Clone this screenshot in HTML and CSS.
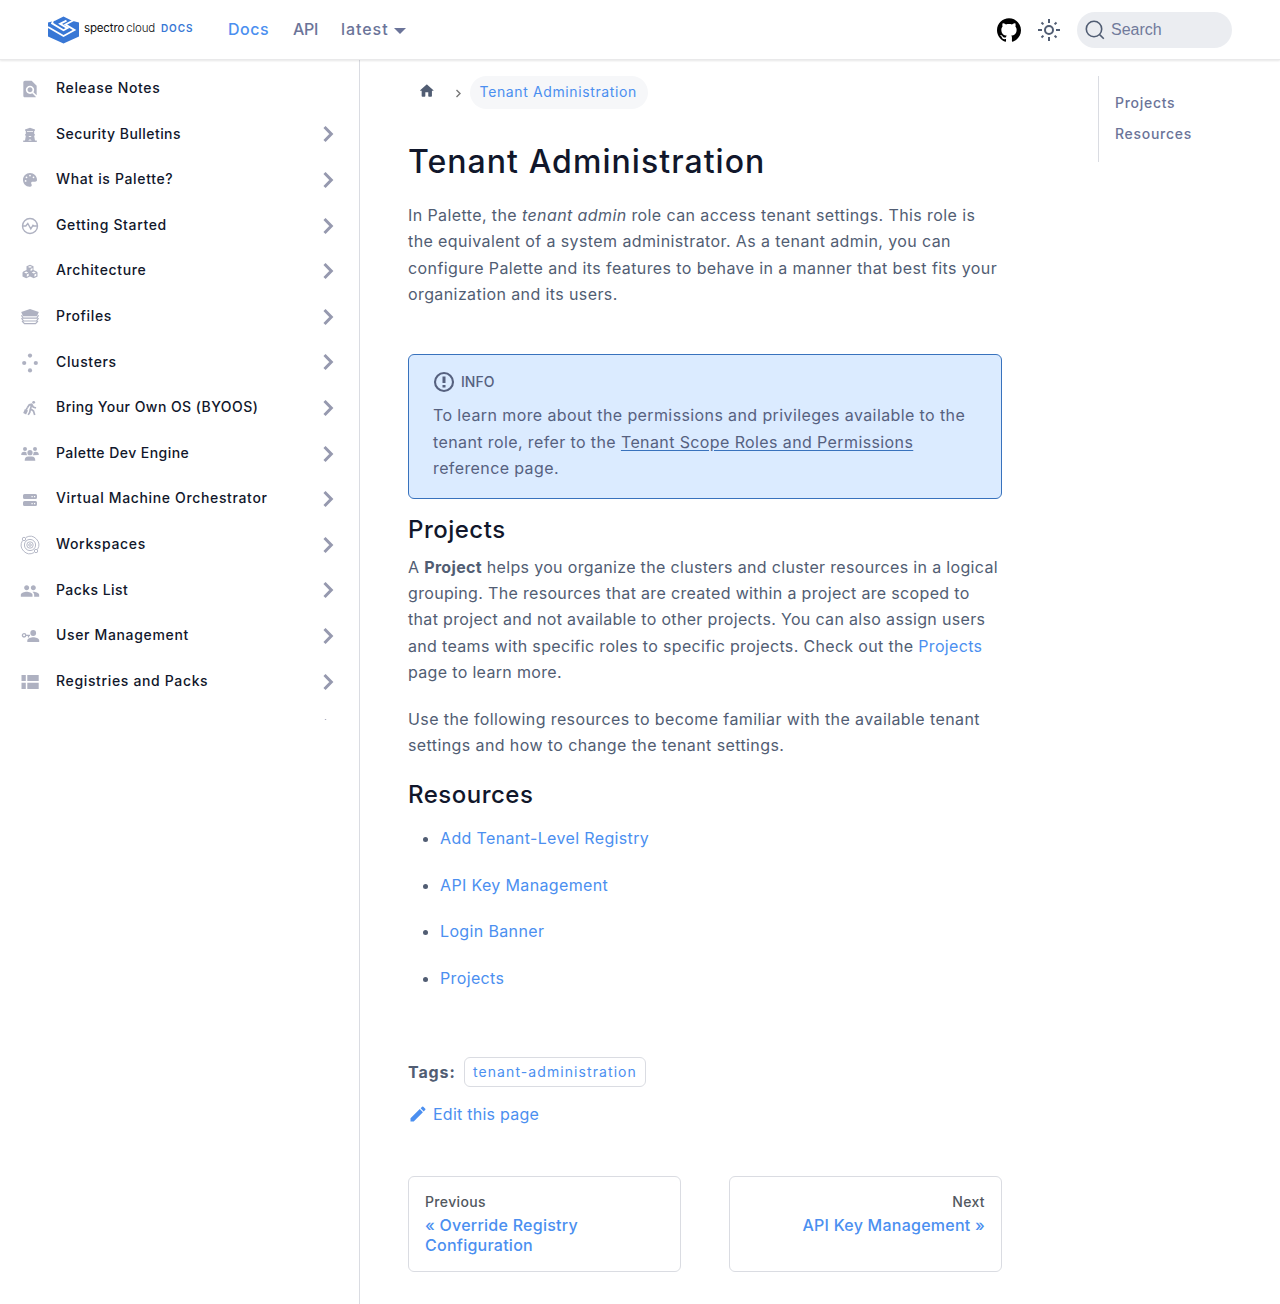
FILE: index.html
```
<!DOCTYPE html>
<html lang="en">
<head>
<meta charset="utf-8">
<title>Tenant Administration | Spectro Cloud Docs</title>
<link rel="stylesheet" href="styles.css">
</head>
<body>
<svg width="0" height="0" class="defs">
  <symbol id="chev" viewBox="0 0 24 32"><path d="m8.500 9 6.800 7-6.800 7" fill="none" stroke="#9699af" stroke-width="3"/></symbol>
</svg>
<header class="navbar">
  <a class="brand">
    <svg width="31" height="28" viewBox="0 0 31 27"><path fill="#3877d5" d="M15.500 0 24 4.200 31 6v14l-15.500 7L0 20V6l7-1.800z"/><path fill="none" stroke="#fff" stroke-width="1.800" d="M0 10.500l15.500 9 11-6-9-5.500 8.500-4.500M5 4.500l-1 2.300 11.500 7 4-2.200-7.500-4.200 6.500-3.300"/></svg>
    <span class="brand-name">spectro <span>cloud</span></span><span class="brand-docs">DOCS</span>
  </a>
  <nav class="nav-links"><a class="active">Docs</a><a>API</a><a class="drop">latest</a></nav>
  <div class="nav-right">
    <svg width="24" height="24" viewBox="0 0 24 24"><path d="M12 .297c-6.630 0-12 5.373-12 12 0 5.303 3.438 9.800 8.205 11.385.6.113.82-.258.82-.577 0-.285-.01-1.040-.015-2.040-3.338.724-4.042-1.610-4.042-1.610C4.422 18.070 3.633 17.700 3.633 17.700c-1.087-.744.084-.729.084-.729 1.205.084 1.838 1.236 1.838 1.236 1.070 1.835 2.809 1.305 3.495.998.108-.776.417-1.305.76-1.605-2.665-.3-5.466-1.332-5.466-5.930 0-1.310.465-2.380 1.235-3.220-.135-.303-.54-1.523.105-3.176 0 0 1.005-.322 3.300 1.230.96-.267 1.980-.399 3-.405 1.020.006 2.040.138 3 .405 2.280-1.552 3.285-1.230 3.285-1.230.645 1.653.24 2.873.12 3.176.765.840 1.230 1.910 1.230 3.220 0 4.610-2.805 5.625-5.475 5.920.42.360.81 1.096.81 2.220 0 1.606-.015 2.896-.015 3.286 0 .315.210.690.825.570C20.565 22.092 24 17.592 24 12.297c0-6.627-5.373-12-12-12"/></svg>
    <svg class="sun" width="24" height="24" viewBox="0 0 24 24"><circle cx="12" cy="12" r="4"/><path d="M12 1v4M12 19v4M1 12h4M19 12h4M4.500 4.500l1.900 1.900M17.600 17.600l1.900 1.900M4.500 19.500l1.900-1.900M17.600 6.400l1.900-1.900"/></svg>
    <div class="search"><svg width="20" height="20" viewBox="0 0 20 20"><path d="M14.400 14.400 18.800 18.800M16.700 9A7.700 7.700 0 1 1 1.300 9a7.700 7.700 0 0 1 15.400 0z"/></svg>Search</div>
  </div>
</header>
<div class="layout">
  <aside class="sidebar"><ul>
    <li><svg class="i" viewBox="0 0 24 24"><path d="M20 19.590V8l-6-6H6c-1.100 0-2 .9-2 2v16c0 1.100.9 2 2 2h12c.45 0 .85-.15 1.190-.4l-4.430-4.430c-.8.520-1.740.830-2.760.830-2.760 0-5-2.240-5-5s2.240-5 5-5 5 2.240 5 5c0 1.020-.31 1.960-.83 2.750zM9 13c0 1.660 1.340 3 3 3s3-1.340 3-3-1.340-3-3-3-3 1.340-3 3z"/></svg><span>Release Notes</span></li>
    <li><svg class="i" viewBox="0 0 20 20"><path fill-rule="evenodd" d="M5 4.500 10 2.800l5 1.700v1.300h-.8v3.400H15v1.400h-.9l.9 5h1.800V17H3.200v-1.400H5l.9-5H5V9.200h.8V5.800H5zM7 6v.8h6V6zM8.300 11l1.700 1.300 1.700-1.300zM10 14.300l-1.800 1.300h3.600z"/></svg><span>Security Bulletins</span><svg class="c"><use href="#chev"/></svg></li>
    <li><svg class="i" viewBox="-109 -109 730 730"><path d="M512 256c0 37-33.600 64-70 64h-98c-26 0-48 21-48 48 0 27 24 45 24 72 0 32-22 61-53 62-3.500.1-7 .2-11 .2C115 512 0 397 0 256S115 0 256 0s256 115 256 256zM128 288a32 32 0 1 0-64 0 32 32 0 1 0 64 0zm0-96a32 32 0 1 0 0-64 32 32 0 1 0 0 64zM288 96a32 32 0 1 0-64 0 32 32 0 1 0 64 0zm96 96a32 32 0 1 0 0-64 32 32 0 1 0 0 64z"/></svg><span>What is Palette?</span><svg class="c"><use href="#chev"/></svg></li>
    <li><svg class="i line" viewBox="0 0 20 20"><circle cx="10" cy="10" r="7.500"/><path d="M2.500 10h3.300l2-2.500 3 5.300 2.200-3.500 1 .7h3.500"/></svg><span>Getting Started</span><svg class="c"><use href="#chev"/></svg></li>
    <li><svg class="i" viewBox="0 0 20 20"><path fill-rule="evenodd" d="m10 2.800 3.500 1.500v3.800l3.200 1.400.8.900v4l-3.700 1.900L10 14.600l-3.800 1.700-3.700-1.900v-4l.8-.9 3.200-1.400V4.300zM10 4 7.900 4.900l2.100.9 2.100-.9zM10.600 7v1.900l1.900-.9V6.100zM6.200 9.600l-2.100.9 2.100.9 2.100-.9zM6.800 12.500v2.200l1.900-1v-2.100zM13.800 9.600l-2.100.9 2.100.9 2.100-.9zM14.400 12.500v2.200l1.900-1v-2.100z"/></svg><span>Architecture</span><svg class="c"><use href="#chev"/></svg></li>
    <li><svg class="i" viewBox="0 0 20 20"><path d="m10 2 8.800 3-1.800 4.300H3L1.200 5z"/><path d="M1.500 8.200 3.200 11.200H16.800L18.500 8.200M1.500 11.200 3.500 14H16.500L18.500 11.200M2 14.200 4.500 16.700h11L18 14.200" fill="none" stroke="#aeb1c1" stroke-width="1.200"/></svg><span>Profiles</span><svg class="c"><use href="#chev"/></svg></li>
    <li><svg class="i" viewBox="0 0 20 20"><circle cx="10" cy="2.600" r="2.100"/><circle cx="4.200" cy="10" r="2.100"/><circle cx="15.800" cy="10" r="2.100"/><circle cx="10" cy="17.400" r="2.100"/></svg><span>Clusters</span><svg class="c"><use href="#chev"/></svg></li>
    <li><svg class="i" viewBox="0 0 20 20"><circle cx="13.700" cy="4.300" r="1.400"/><path d="m4.900 11 3.100 1.600-1.900 4-2.900-1.500z"/><path d="m7.300 9.800 2-3 2.400-.5 1.500 2.700 2.800 1M11.700 6.500l-1.200 4.300 3 2.200 1.200 4M10.300 11.500l-.6 3-1.500 2.400M7.200 9.800l-1 2" fill="none" stroke="#aeb1c1" stroke-width="1.700"/></svg><span>Bring Your Own OS (BYOOS)</span><svg class="c"><use href="#chev"/></svg></li>
    <li><svg class="i" viewBox="0 0 20 20"><circle cx="5" cy="4.900" r="2"/><circle cx="15" cy="4.900" r="2"/><circle cx="10" cy="8.700" r="2.600"/><path d="M1.200 11c0-2.300 1-3.300 3-3.300 1 0 1.900.3 2.300.9-.2 1.200.2 2 .8 2.700zM18.800 11c0-2.300-1-3.300-3-3.300-1 0-1.900.3-2.300.9.2 1.200-.2 2-.8 2.700zM4.700 16.800c0-3 1.300-4.300 3.500-4.300h3.600c2.200 0 3.500 1.300 3.500 4.300z"/></svg><span>Palette Dev Engine</span><svg class="c"><use href="#chev"/></svg></li>
    <li><svg class="i" viewBox="0 0 20 20"><path fill-rule="evenodd" d="M4.500 4h11Q17 4 17 5.500v2Q17 9 15.500 9h-11Q3 9 3 7.500v-2Q3 4 4.500 4zM11.500 6v1.200h1.200V6zM14 6v1.200h1.200V6zM4.500 11h11q1.500 0 1.500 1.500v2q0 1.500-1.500 1.500h-11Q3 16 3 14.500v-2Q3 11 4.500 11zm7 2v1.200h1.200V13zm2.500 0v1.200h1.200V13z"/></svg><span>Virtual Machine Orchestrator</span><svg class="c"><use href="#chev"/></svg></li>
    <li><svg class="i line thin" viewBox="0 0 20 20"><circle cx="10" cy="10" r="5.600"/><circle cx="10" cy="10" r="3.200"/><circle cx="10" cy="10" r="1.300"/><circle cx="4" cy="4" r="1.700"/><circle cx="16" cy="16" r="1.700"/><path d="M6 2.400a8.600 8.600 0 0 1 11.500 12M14 17.600A8.600 8.600 0 0 1 2.500 5.600"/></svg><span>Workspaces</span><svg class="c"><use href="#chev"/></svg></li>
    <li><svg class="i" viewBox="0 0 24 24"><path d="M16 11c1.660 0 3-1.340 3-3s-1.340-3-3-3-3 1.340-3 3 1.340 3 3 3zm-8 0c1.660 0 3-1.340 3-3S9.660 5 8 5 5 6.340 5 8s1.340 3 3 3zm0 2c-2.330 0-7 1.170-7 3.500V19h14v-2.500C15 14.170 10.330 13 8 13zm8 0c-.29 0-.62.020-.97.050C16.190 13.890 17 15.020 17 16.500V19h6v-2.500c0-2.330-4.670-3.500-7-3.500z"/></svg><span>Packs List</span><svg class="c"><use href="#chev"/></svg></li>
    <li><svg class="i" viewBox="0 0 20 20"><circle cx="13.200" cy="7" r="2.900"/><path d="M7.300 16v-1.500c0-2 3.900-3.200 6-3.200s5.900 1.200 5.900 3.200V16z"/><path d="M5.800 9.300H10M8.500 9.300v2.200M5.800 9.300a1.700 1.700 0 1 1-3.400 0 1.700 1.700 0 0 1 3.400 0z" fill="none" stroke="#aeb1c1" stroke-width="1.300"/></svg><span>User Management</span><svg class="c"><use href="#chev"/></svg></li>
    <li><svg class="i" viewBox="0 0 20 20"><path d="M1.500 3h4.300v6H1.500zM7.300 3h11.400v6H7.300zM1.500 10.700h4.300v6.300H1.500zM7.300 10.700h11.400v6.300H7.300z"/></svg><span>Registries and Packs</span><svg class="c"><use href="#chev"/></svg></li>
    <li><span></span><svg class="c"><use href="#chev"/></svg></li>
  </ul></aside>
  <main>
    <article>
      <nav class="crumbs"><svg width="17.600" height="17.600" viewBox="0 0 24 24"><path d="M10 19v-5h4v5c0 .55.45 1 1 1h3c.55 0 1-.45 1-1v-7h1.700c.46 0 .68-.57.33-.87L12.670 3.600c-.38-.34-.96-.34-1.340 0l-8.360 7.530c-.34.300-.13.870.33.870H5v7c0 .55.45 1 1 1h3c.55 0 1-.45 1-1z"/></svg><svg class="sep" width="7" height="9" viewBox="0 0 7 9"><path d="m1.500 1 3.500 3.500L1.500 8"/></svg><span>Tenant Administration</span></nav>
      <h1>Tenant Administration</h1>
      <p class="intro">In Palette, the <em>tenant admin</em> role can access tenant settings. This role is<br>the equivalent of a system administrator. As a tenant admin, you can<br>configure Palette and its features to behave in a manner that best fits your<br>organization and its users.</p>
      <div class="info">
        <div class="info-title"><svg width="22" height="22" viewBox="0 0 22 22"><circle cx="11" cy="11" r="9"/><path d="M11 5.500v6.500M11 14v2.600" stroke-width="3"/></svg>INFO</div>
        <p>To learn more about the permissions and privileges available to the<br>tenant role, refer to the <a>Tenant Scope Roles and Permissions</a><br>reference page.</p>
      </div>
      <h2>Projects</h2>
      <p class="tight">A <b>Project</b> helps you organize the clusters and cluster resources in a logical<br>grouping. The resources that are created within a project are scoped to<br>that project and not available to other projects. You can also assign users<br>and teams with specific roles to specific projects. Check out the <a>Projects</a><br>page to learn more.</p>
      <p class="intro">Use the following resources to become familiar with the available tenant<br>settings and how to change the tenant settings.</p>
      <h2 class="res">Resources</h2>
      <ul class="links"><li><a>Add Tenant-Level Registry</a></li><li><a>API Key Management</a></li><li><a>Login Banner</a></li><li><a>Projects</a></li></ul>
      <div class="tags"><b>Tags:</b><a>tenant-administration</a></div>
      <a class="edit"><svg width="20" height="20" viewBox="0 0 40 40"><path d="m34.500 11.700-3 3.100-6.300-6.300 3.100-3q.5-.5 1.200-.5t1.100.5l3.900 3.900q.5.400.5 1.100t-.5 1.200zM5 28.600 23.500 10.200l6.300 6.300L11.400 35H5v-6.400z"/></svg>Edit this page</a>
      <nav class="pager">
        <a><small>Previous</small>« Override Registry<br>Configuration</a>
        <a class="next"><small>Next</small>API Key Management »</a>
      </nav>
    </article>
    <div class="toc"><a>Projects</a><a>Resources</a></div>
  </main>
</div>
</body>
</html>
```
FILE: styles.css
```
* { box-sizing: border-box; }
body { margin: 0; background: #fff; color: #515d73; font: 400 16px/26.4px Inter, sans-serif; letter-spacing: .36px; }
svg { flex: none; display: block; }
ul { list-style: none; margin: 0; padding: 0; }
a { color: #4b8ff0; text-decoration: none; }
.defs { position: absolute; }
.navbar { display: flex; align-items: center; height: 60px; padding: 0 48px; background: #fff; position: relative; box-shadow: 0 1px 2px rgba(0,0,0,.1); border-bottom: 1px solid #e9e9ea; }
.brand { display: flex; align-items: center; width: 180px; }
.brand svg { margin-top: 1px; }
.brand-name { margin: -3px 0 0 5px; color: #111; font-size: 11.5px; letter-spacing: -.15px; white-space: nowrap; width: 77px; }
.brand-name span { font-weight: 300; margin-left: -1px; }
.brand-docs { margin-top: -2px; color: #3877d5; font-size: 10px; font-weight: 600; letter-spacing: .9px; }
.nav-links { display: flex; gap: 24px; font-weight: 500; letter-spacing: .5px; }
.nav-links a { color: #6b7499; width: 41px; }
.nav-links a:nth-child(2) { width: 24px; letter-spacing: -.3px; }
.nav-links .active { color: #4b8ff0; }
.nav-links .drop { width: auto; display: flex; align-items: center; gap: 5px; letter-spacing: .95px; }
.drop::after { content: ""; margin-top: 3px; border: 6.4px solid transparent; border-top-color: #6b7499; border-bottom: 0; }
.nav-right { display: flex; align-items: center; margin-left: auto; gap: 16px; }
.sun { fill: none; stroke: #515d73; stroke-width: 2; }
.search { display: flex; align-items: center; gap: 6px; width: 155px; height: 36px; padding: 0 8px; border-radius: 18px; background: #ebedf1; color: #717a9b; font: 16px "Liberation Sans", sans-serif; letter-spacing: 0; }
.search svg { fill: none; stroke: #515d73; stroke-width: 1.6; }
.layout { display: flex; height: 1244px; }
.sidebar { width: 360px; border-right: 1px solid #dadce2; }
.sidebar ul { height: 660px; overflow: hidden; padding-top: 6px; }
.sidebar li { display: flex; align-items: center; height: 45.6px; padding: 0 19px 0 20px; color: #11172b; font-size: 14px; font-weight: 500; letter-spacing: .65px; }
.sidebar li:nth-child(2), .sidebar li:nth-child(8), .sidebar li:nth-child(9), .sidebar li:nth-child(12) { letter-spacing: .45px; }
.sidebar li span { flex: 1; padding: 0 0 1px 16px; }
.i { width: 20px; height: 20px; fill: #aeb1c1; margin-top: 1px; }
.line { fill: none; stroke: #aeb1c1; stroke-width: 1.4; }
.thin { stroke-width: .9; }
.c { width: 24px; height: 32px; }
main { flex: 1; display: flex; justify-content: space-between; padding: 16px 0 0 48px; }
article { width: 594px; }
.crumbs { display: flex; align-items: center; height: 33px; padding-left: 10px; font-size: 14px; letter-spacing: .62px; }
.crumbs > svg { fill: #515d73; margin-bottom: 3px; }
.crumbs .sep { fill: none; stroke: #777; stroke-width: 1.4; margin: 1px 8px 0 19px; }
.crumbs span { height: 33px; line-height: 32px; padding: 0 10px; width: 178px; border-radius: 17px; background: #f6f7f9; color: #4b8ff0; white-space: nowrap; }
h1, h2 { margin: 0; color: #11172b; font-weight: 500; white-space: nowrap; }
h1 { margin: 32px 0 20px; font-size: 32px; line-height: 41px; letter-spacing: 1.05px; }
h2 { font-size: 24px; line-height: 30px; letter-spacing: .5px; }
p { margin: 0 0 20px; white-space: nowrap; }
.intro { letter-spacing: .4px; }
.info { height: 145px; margin: 46px 0 16px; padding: 16px 24px; border: 1px solid #3872bd; border-radius: 6px; background: #dbebff; color: #56617f; letter-spacing: .39px; }
.info-title { display: flex; align-items: center; gap: 6px; height: 23px; margin-bottom: 8.500px; font-size: 14px; font-weight: 500; letter-spacing: 0; }
.info-title svg { fill: none; stroke: #56617f; stroke-width: 2.1; }
.info a { color: inherit; text-decoration: underline; text-decoration-color: #3872bd; text-underline-offset: 2px; }
.tight { margin-top: 9px; letter-spacing: .33px; }
.res { margin-top: 22px; }
.links { margin: 15px 0 0; padding-left: 32px; list-style: disc; }
.links li { margin-bottom: 20px; }
.tags { display: flex; align-items: center; margin-top: 66px; height: 30px; gap: 8px; }
.tags b { width: 48px; letter-spacing: .9px; }
.tags a { width: 182px; height: 30px; line-height: 27px; padding: 0 8px; border: 1px solid #dadce2; border-radius: 6px; font-size: 14px; letter-spacing: 1.08px; }
.edit { display: flex; align-items: center; gap: 5px; margin-top: 14px; letter-spacing: .25px; }
.edit svg { fill: #4b8ff0; }
.pager { display: flex; gap: 48px; margin-top: 48px; }
.pager a { flex: 1; height: 96px; padding: 14px 16px; border: 1px solid #dadce2; border-radius: 6px; font-weight: 500; line-height: 20px; letter-spacing: .25px; }
.pager small { display: block; color: #525860; font-size: 14px; line-height: 21px; margin-bottom: 3px; letter-spacing: .35px; padding-top: 0; }
.pager .next { text-align: right; }
.toc { width: 182px; height: 86px; padding: 14px 16px; border-left: 1px solid #dadce2; font-size: 14px; font-weight: 500; letter-spacing: .72px; }
.toc a { display: block; height: 31px; color: #6b7499; }
```
